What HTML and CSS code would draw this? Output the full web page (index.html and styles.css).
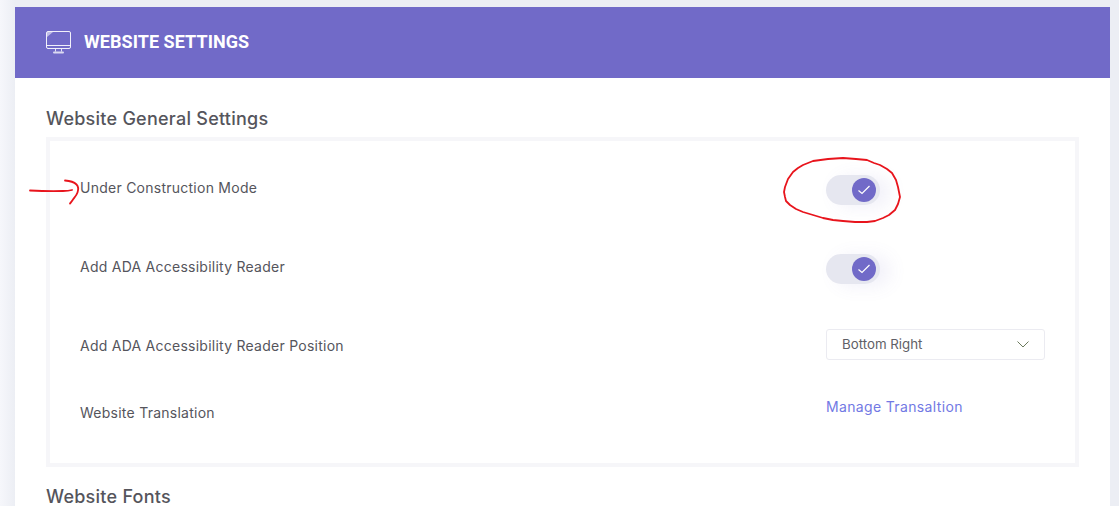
FILE: index.html
```html
<!DOCTYPE html>
<html lang="en">
<head>
<meta charset="utf-8">
<title>Website Settings</title>
<link rel="stylesheet" href="styles.css">
</head>
<body>
<main class="card">
  <header class="card-head">
    <svg class="monitor" width="28" height="25" viewBox="0 0 28 25" fill="none" stroke="#fff" stroke-width="1">
      <rect x="1.5" y="1.5" width="24" height="17" rx="1.5" stroke-opacity=".9"/>
      <path d="M1.5 15.5h24" stroke-opacity=".9"/>
      <path d="M2 7V2h6z" fill="#fff" fill-opacity=".55" stroke="none"/>
      <path d="M10.5 19v2.5M16.5 19v2.5" stroke-opacity=".8"/>
      <rect x="8" y="21.5" width="11" height="2" rx="1" fill="#fff" fill-opacity=".75" stroke="none"/>
    </svg>
    <h1 class="card-title">WEBSITE SETTINGS</h1>
  </header>
  <section class="card-body">
    <h2 class="section-title">Website General Settings</h2>
    <div class="settings-box">
      <div class="row row-first">
        <span class="label label-up">Under Construction Mode</span>
        <span class="toggle"><span class="knob"><svg width="14" height="12" viewBox="0 0 14 12" fill="none" stroke="#fff" stroke-width="1.2"><path d="M1.5 6.5l3.5 3 7.5-7.500"/></svg></span></span>
      </div>
      <div class="row row-second">
        <span class="label label-up">Add ADA Accessibility Reader</span>
        <span class="toggle"><span class="knob"><svg width="14" height="12" viewBox="0 0 14 12" fill="none" stroke="#fff" stroke-width="1.2"><path d="M1.5 6.5l3.5 3 7.5-7.500"/></svg></span></span>
      </div>
      <div class="row row-third">
        <span class="label label-low">Add ADA Accessibility Reader Position</span>
        <div class="select">
          <span>Bottom Right</span>
          <svg width="12" height="7" viewBox="0 0 12 7" fill="none" stroke="#6b7a5c" stroke-width="1"><path d="M.5.5l5.500 5.500 5.500-5.500"/></svg>
        </div>
      </div>
      <div class="row row-fourth">
        <span class="label label-lowest">Website Translation</span>
        <a class="link" href="#">Manage Transaltion</a>
      </div>
    </div>
    <h2 class="section-title section-next">Website Fonts</h2>
  </section>
</main>
<svg class="ink" width="1119" height="506" viewBox="0 0 1119 506" fill="none" stroke="#e8141c" stroke-width="1.8" stroke-linecap="round" stroke-linejoin="round">
  <path d="M30 190.500c10 .5 22 .8 33 .5 4-.1 7-.5 9-1"/>
  <path d="M65 180.500c5 .3 9 1.500 11.500 4 2 2 2 5 1 8-1 3-3 5-4.500 7-1 1.500-2 3-3 4"/>
  <path d="M813 161L828 159L843 158L856 159L867 160L874 163L880 165L887 169L892 173L896 180L898 187L900 197L898 204L895 210L889 215L883 218L875 221L867 222L855 222L843 221L833 220L823 218L813 215L803 212L796 209L790 205L786 201L785 197L784 192L785 187L788 179L793 172L798 168L803 165L808 163z"/>
</svg>
</body>
</html>
```
FILE: styles.css
```css
* { box-sizing: border-box; }
body {
  margin: 0;
  height: 506px;
  overflow: hidden;
  padding: 7px 9px 0 15px;
  background: linear-gradient(90deg, #f6f7fb 0, #eceef4 15px);
  font-family: Inter, "Open Sans", sans-serif;
  color: #4d4d55;
}
.card { background: #fff; height: 100%; }
.card-head {
  height: 71px;
  background: #716ac8;
  display: flex;
  align-items: center;
  gap: 11px;
  padding: 0 0 0 30px;
  color: #fff;
}
.monitor { flex: none; }
.card-title {
  margin: -2px 0 0;
  font: 700 18px/1 Roboto, sans-serif;
  letter-spacing: .05px;
}
.card-body { padding: 29px 31px 0; }
.section-title {
  margin: 0 0 6px;
  font: 500 18px/24px Inter, sans-serif;
  letter-spacing: .25px;
  color: #55555c;
}
.section-next { margin: 22px 0 0; line-height: 16px; }
.settings-box {
  height: 330px;
  border: 4px solid #f6f6f9;
  padding: 9px 30px 0;
  display: flex;
  flex-direction: column;
}
.row {
  display: grid;
  grid-template-columns: 746px 219px;
  align-items: center;
}
.row-first { height: 80px; }
.row-second { height: 78px; }
.row-third { height: 74px; }
.row-fourth { height: 48px; }
.label {
  font-size: 14px;
  line-height: 20px;
  letter-spacing: .25px;
  color: #55555c;
}
.label-up { margin-top: -4px; }
.label-low { margin-top: 2px; }
.label-lowest { margin-top: 14px; }
.toggle {
  width: 54px;
  height: 30px;
  border-radius: 15px;
  background: #e6e7f0;
  display: flex;
  justify-content: flex-end;
  align-items: center;
  padding-right: 4px;
  box-shadow: 10px 2px 18px rgba(113, 106, 200, .1);
}
.knob {
  width: 24px;
  height: 24px;
  border-radius: 50%;
  background: #716ac8;
  display: flex;
  align-items: center;
  justify-content: center;
}
.select {
  height: 31px;
  margin-bottom: 2px;
  border: 1px solid #ebebf1;
  border-radius: 3px;
  padding: 0 15px;
  display: flex;
  align-items: center;
  justify-content: space-between;
  font-size: 13.3px;
  color: #5f5f66;
}
.link {
  font-size: 14px;
  letter-spacing: .35px;
  color: #7279e4;
  text-decoration: none;
}
.ink {
  position: absolute;
  left: 0;
  top: 0;
  pointer-events: none;
}
```
